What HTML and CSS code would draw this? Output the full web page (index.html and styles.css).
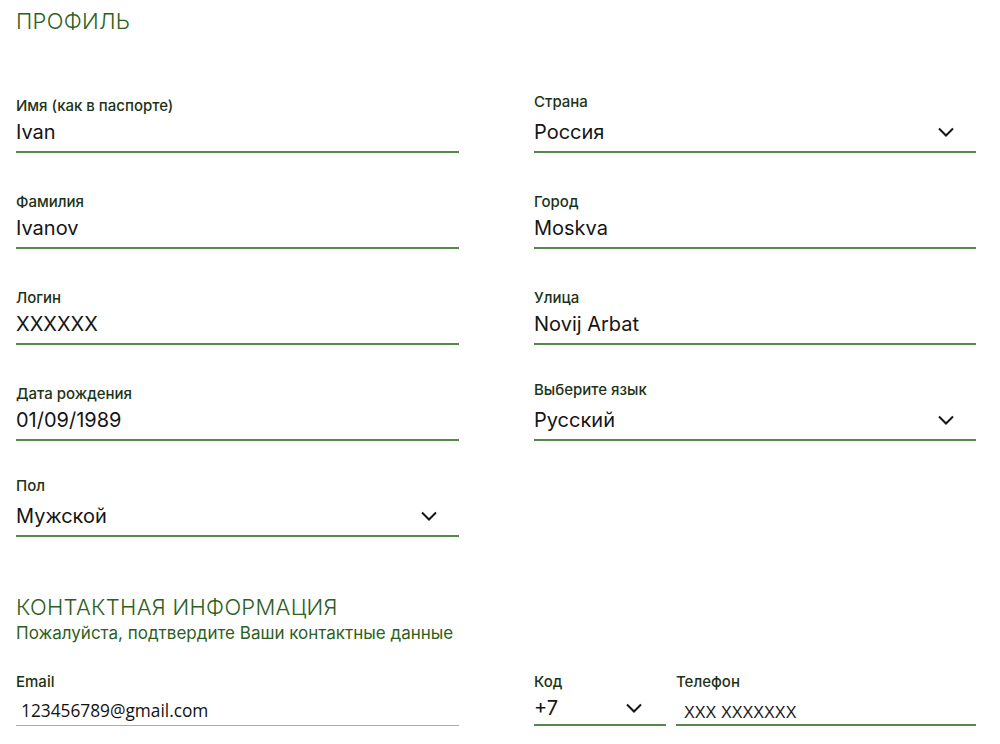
FILE: index.html
```html
<!DOCTYPE html>
<html lang="ru">
<head>
<meta charset="utf-8">
<title>Профиль</title>
<link rel="stylesheet" href="styles.css">
</head>
<body>
<main class="page">
  <h1 class="section-title">ПРОФИЛЬ</h1>
  <div class="form-grid">
    <div class="col">
      <div class="field"><div class="label">Имя (как в паспорте)</div><div class="value">Ivan</div></div>
      <div class="field"><div class="label">Фамилия</div><div class="value">Ivanov</div></div>
      <div class="field"><div class="label">Логин</div><div class="value">XXXXXX</div></div>
      <div class="field"><div class="label">Дата рождения</div><div class="value">01/09/1989</div></div>
      <div class="field select"><div class="label">Пол</div><div class="value"><span>Мужской</span><svg class="chev" viewBox="0 0 16 10" width="16" height="10"><path d="M1 1.5 L8 8.5 L15 1.5"/></svg></div></div>
    </div>
    <div class="col">
      <div class="field select"><div class="label">Страна</div><div class="value"><span>Россия</span><svg class="chev" viewBox="0 0 16 10" width="16" height="10"><path d="M1 1.5 L8 8.5 L15 1.5"/></svg></div></div>
      <div class="field"><div class="label">Город</div><div class="value">Moskva</div></div>
      <div class="field"><div class="label">Улица</div><div class="value">Novij Arbat</div></div>
      <div class="field select"><div class="label">Выберите язык</div><div class="value"><span>Русский</span><svg class="chev" viewBox="0 0 16 10" width="16" height="10"><path d="M1 1.5 L8 8.5 L15 1.5"/></svg></div></div>
    </div>
  </div>

  <h2 class="section-title contact-title">КОНТАКТНАЯ ИНФОРМАЦИЯ</h2>
  <p class="subtitle">Пожалуйста, подтвердите Ваши контактные данные</p>

  <div class="contact-grid">
    <div class="cfield email">
      <div class="label">Email</div>
      <div class="cvalue email-value">123456789@gmail.com</div>
    </div>
    <div class="phone-row">
      <div class="cfield code">
        <div class="label">Код</div>
        <div class="cvalue code-value"><span>+7</span><svg class="chev" viewBox="0 0 16 10" width="16" height="10"><path d="M1 1.5 L8 8.5 L15 1.5"/></svg></div>
      </div>
      <div class="cfield phone">
        <div class="label">Телефон</div>
        <div class="cvalue phone-value">XXX XXXXXXX</div>
      </div>
    </div>
  </div>
</main>
</body>
</html>
```

FILE: styles.css
```css
* { box-sizing: border-box; }
html, body { margin: 0; padding: 0; background: #fff; }
body {
  font-family: Inter, "Noto Sans", sans-serif;
  color: #151515;
}
.page {
  width: 976px;
  padding-left: 16px;
}
.section-title {
  margin: 7px 0 0;
  font-size: 22px;
  line-height: 28px;
  font-weight: 300;
  color: #2d5f22;
  letter-spacing: 0.3px;
}
.form-grid {
  margin-top: 58px;
  display: grid;
  grid-template-columns: 443px 442px;
  column-gap: 75px;
}
.col {
  display: flex;
  flex-direction: column;
  gap: 36px;
}
.field {
  height: 60px;
  padding-top: 4px;
  border-bottom: 2px solid #55864b;
}
.label {
  font-size: 15px;
  line-height: 18px;
  font-weight: 500;
  color: #1c3318;
}
.value {
  margin-top: 3px;
  font-size: 20px;
  line-height: 28px;
  color: #151515;
  display: flex;
  align-items: center;
  justify-content: space-between;
}
.field.select { padding-top: 0; }
.field.select .value { margin-top: 7px; }
.chev {
  margin-right: 22px;
  fill: none;
  stroke: #151515;
  stroke-width: 2;
}
.contact-title {
  margin-top: 56px;
}
.subtitle {
  margin: 2px 0 0;
  font-size: 17px;
  line-height: 20px;
  color: #2d5f22;
}
.contact-grid {
  margin-top: 30px;
  display: grid;
  grid-template-columns: 443px 442px;
  column-gap: 75px;
}
.phone-row {
  display: grid;
  grid-template-columns: 132px 300px;
  column-gap: 10px;
}
.cfield { height: 53px; }
.cvalue {
  margin-top: 5px;
  height: 28px;
  display: flex;
  align-items: center;
}
.email-value {
  font-family: "Open Sans", sans-serif;
  font-size: 17.3px;
  padding-left: 5px;
  color: #111;
}
.email { border-bottom: 1px solid #a3b5a0; }
.code, .phone { border-bottom: 2px solid #55864b; }
.code-value {
  justify-content: space-between;
  font-size: 20px;
  margin-top: 3px;
  height: 28px;
}
.code-value .chev { margin-right: 24px; }
.phone-value {
  font-family: "Liberation Sans", Arial, sans-serif;
  font-size: 16.2px;
  padding-left: 8px;
  color: #1a1a1a;
  padding-top: 4px;
}
```
